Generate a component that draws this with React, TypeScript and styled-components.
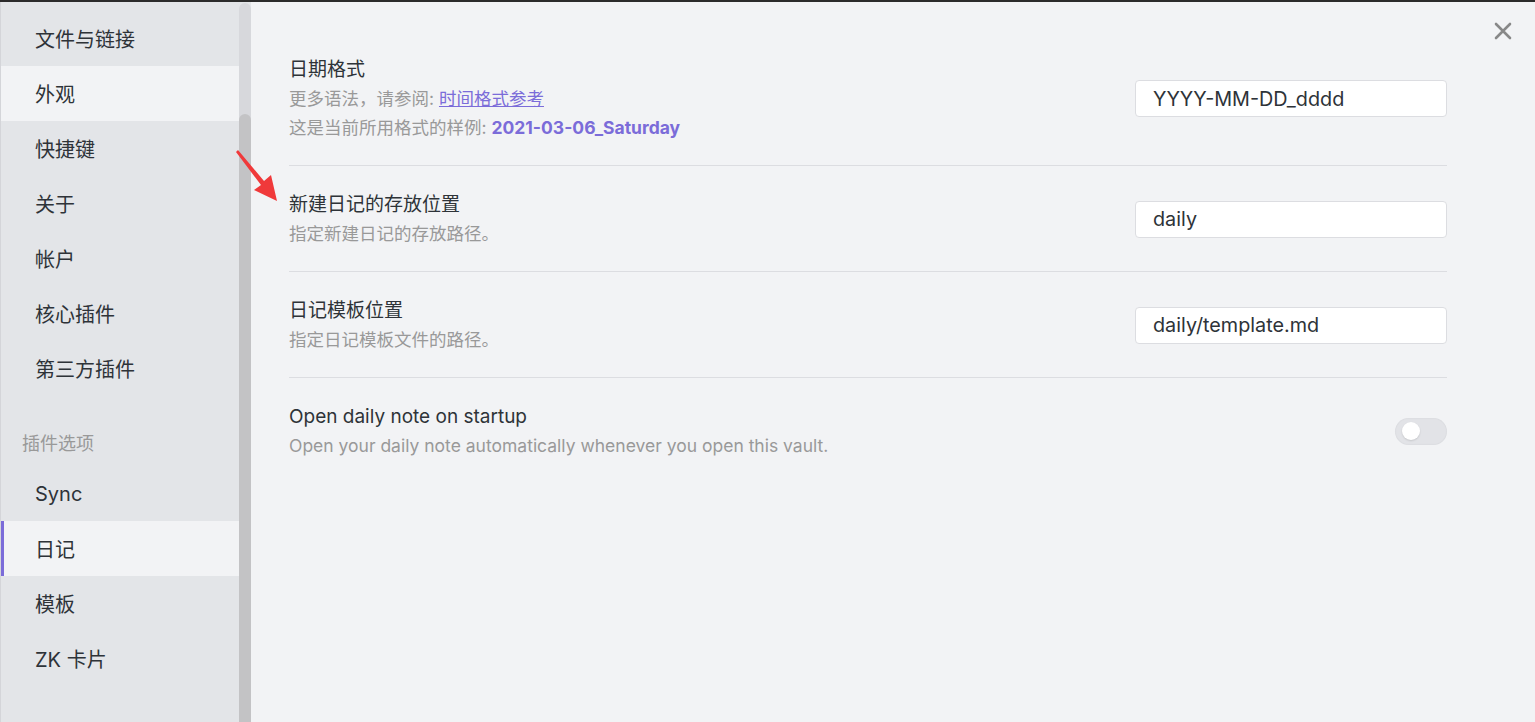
import React from "react";
import { styled, createGlobalStyle } from "styled-components";

const GlobalStyle = createGlobalStyle`
  html, body {
    margin: 0;
    padding: 0;
    height: 100%;
  }
  body {
    font-family: Inter, "Noto Sans CJK SC", sans-serif;
    color: #2e3338;
    background: #f2f3f5;
  }
  #root {
    height: 100%;
  }
`;

const navTop = ["文件与链接", "外观", "快捷键", "关于", "帐户", "核心插件", "第三方插件"];
const navPlugins = ["Sync", "日记", "模板", "ZK 卡片"];

interface ISetting {
  name: string;
  desc: React.ReactNode;
  value?: string;
  toggle?: boolean;
}

function App() {
  const settings: ISetting[] = [
    {
      name: "日期格式",
      desc: (
        <>
          <div>
            更多语法，请参阅: <Link href="#">时间格式参考</Link>
          </div>
          <div>
            这是当前所用格式的样例: <Sample>2021-03-06_Saturday</Sample>
          </div>
        </>
      ),
      value: "YYYY-MM-DD_dddd",
    },
    { name: "新建日记的存放位置", desc: "指定新建日记的存放路径。", value: "daily" },
    { name: "日记模板位置", desc: "指定日记模板文件的路径。", value: "daily/template.md" },
    {
      name: "Open daily note on startup",
      desc: "Open your daily note automatically whenever you open this vault.",
      toggle: true,
    },
  ];

  return (
    <>
      <GlobalStyle />
      <Window>
        <Sidebar>
          <NavList>
            {navTop.map(item => (
              <NavItem key={item} $hover={item === "外观"}>
                {item}
              </NavItem>
            ))}
            <NavHeader>插件选项</NavHeader>
            {navPlugins.map(item => (
              <NavItem key={item} $active={item === "日记"}>
                {item}
              </NavItem>
            ))}
          </NavList>
          <ScrollTrack>
            <ScrollThumb />
          </ScrollTrack>
        </Sidebar>
        <Content>
          <CloseButton aria-label="close">
            <svg width="18" height="18" viewBox="0 0 18 18">
              <path d="M2 2L16 16M16 2L2 16" stroke="#888" strokeWidth="2.6" strokeLinecap="round" />
            </svg>
          </CloseButton>
          <Arrow width="50" height="56" viewBox="0 0 50 56">
            <polygon points="1,2 3,0 29,31 36,25 42,51 19,40 26,35" fill="#f0393a" />
          </Arrow>
          {settings.map((s, i) => (
            <SettingRow key={s.name} $last={i === settings.length - 1}>
              <SettingInfo>
                <SettingName>{s.name}</SettingName>
                <SettingDesc>{s.desc}</SettingDesc>
              </SettingInfo>
              {s.toggle ? (
                <Toggle>
                  <Knob />
                </Toggle>
              ) : (
                <TextInput defaultValue={s.value} spellCheck={false} />
              )}
            </SettingRow>
          ))}
        </Content>
      </Window>
    </>
  );
}

export default App;

const Window = styled.div`
  display: flex;
  height: 722px;
  box-sizing: border-box;
  border-top: 2px solid #2b2b2b;
  overflow: hidden;
`;

const Sidebar = styled.div`
  display: flex;
  width: 251px;
  flex-shrink: 0;
  background: #e3e5e8;
  border-left: 1px solid #d4d5d9;
  box-sizing: border-box;
`;

const NavList = styled.div`
  flex: 1;
  display: flex;
  flex-direction: column;
  padding-top: 9px;
`;

const NavItem = styled.div<{ $active?: boolean; $hover?: boolean }>`
  height: 55px;
  display: flex;
  align-items: center;
  box-sizing: border-box;
  font-size: 20px;
  color: #2e3338;
  background: ${p => (p.$active || p.$hover ? "#f2f3f5" : "transparent")};
  border-left: 3px solid ${p => (p.$active ? "#7b6cd9" : "transparent")};
  padding-left: 31px;
`;

const NavHeader = styled.div`
  font-size: 18px;
  color: #999;
  padding: 34px 0 9px 21px;
  line-height: 27px;
`;

const ScrollTrack = styled.div`
  width: 12px;
  margin-top: 1px;
  display: flex;
  flex-direction: column;
  justify-content: flex-end;
  background: #d7d8dc;
  border-radius: 6px 6px 0 0;
`;

const ScrollThumb = styled.div`
  height: 608px;
  background: #c3c3c5;
  border-radius: 6px 6px 0 0;
`;

const Content = styled.div`
  position: relative;
  flex: 1;
  padding: 29px 88px 0 38px;
  background: #f2f3f5;
`;

const CloseButton = styled.button`
  position: absolute;
  top: 20px;
  right: 23px;
  border: none;
  background: transparent;
  padding: 0;
  width: 18px;
  height: 18px;
  cursor: pointer;
`;

const Arrow = styled.svg`
  position: absolute;
  left: -16px;
  top: 148px;
`;

const SettingRow = styled.div<{ $last?: boolean }>`
  display: flex;
  align-items: center;
  justify-content: space-between;
  padding: 24px 0 23px;
  border-bottom: ${p => (p.$last ? "none" : "1px solid #dcdde1")};
`;

const SettingInfo = styled.div`
  display: flex;
  flex-direction: column;
`;

const SettingName = styled.div`
  font-size: 19px;
  line-height: 29px;
  color: #2e3338;
`;

const SettingDesc = styled.div`
  font-size: 17.5px;
  line-height: 29px;
  color: #999;
`;

const Link = styled.a`
  color: #7b6cd9;
  text-decoration: underline;
`;

const Sample = styled.span`
  color: #7b6cd9;
  font-weight: 700;
`;

const TextInput = styled.input`
  width: 312px;
  height: 37px;
  box-sizing: border-box;
  padding: 0 17px;
  border: 1px solid #dcdde1;
  border-radius: 4px;
  background: #fff;
  font-family: Inter, "Noto Sans CJK SC", sans-serif;
  font-size: 19.8px;
  color: #2e3338;
  outline: none;
`;

const Toggle = styled.div`
  width: 52px;
  height: 27px;
  border-radius: 14px;
  background: #e2e3e7;
  box-shadow: inset 0 0 2px rgba(0, 0, 0, 0.08);
  display: flex;
  align-items: center;
  padding-left: 7px;
  box-sizing: border-box;
`;

const Knob = styled.div`
  width: 18px;
  height: 18px;
  border-radius: 50%;
  background: #fff;
  box-shadow: 0 1px 2px rgba(0, 0, 0, 0.12);
`;
